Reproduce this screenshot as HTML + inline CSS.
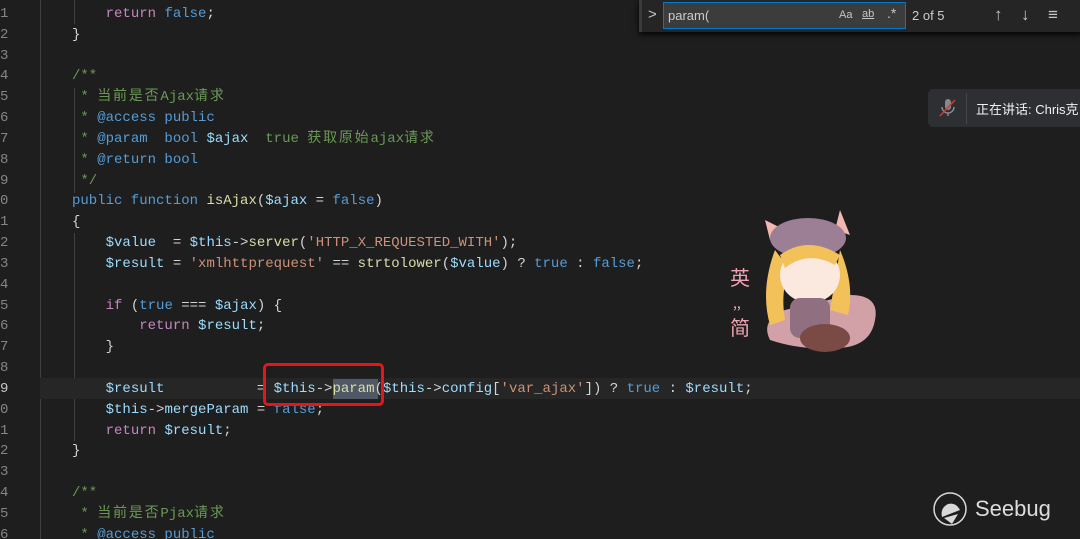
<!DOCTYPE html>
<html><head><meta charset="utf-8"><style>
html,body{margin:0;padding:0;background:#1e1e1e;width:1080px;height:539px;overflow:hidden;position:relative;}
.code{position:absolute;left:72px;top:4px;font-family:"Liberation Mono","Noto Sans CJK SC",monospace;font-size:14px;line-height:20.83px;color:#d4d4d4;white-space:pre;margin:0}
.ln{position:absolute;left:0;top:4px;font-family:"Liberation Mono",monospace;font-size:14px;line-height:20.83px;color:#858585;white-space:pre;margin:0}
.k{color:#569cd6}.c{color:#c586c0}.v{color:#9cdcfe}.f{color:#dcdcaa}.s{color:#ce9178}.g{color:#6a9955}
.cj{letter-spacing:1.8px}
.guide{position:absolute;width:1px;background:#404040}
</style></head><body>
<div class="guide" style="left:40px;top:0;height:539px"></div>
<div class="guide" style="left:74px;top:0;height:24px"></div>
<div class="guide" style="left:74px;top:88px;height:105px"></div>
<div class="guide" style="left:74px;top:233px;height:208px"></div>
<div style="position:absolute;left:40px;top:378px;width:1040px;height:21px;background:#262626"></div>
<div style="position:absolute;left:333px;top:379px;width:45px;height:20px;background:#4f5864"></div>
<pre class="ln">1
2
3
4
5
6
7
8
9
0
1
2
3
4
5
6
7
8
<span style="color:#c6c6c6">9</span>
0
1
2
3
4
5
6</pre>
<pre class="code">    <span class="c">return</span> <span class="k">false</span>;
}

<span class="g">/**</span>
<span class="g"> * <span class="cj">当前是否</span>Ajax<span class="cj">请求</span></span>
<span class="g"> * </span><span class="k">@access public</span>
<span class="g"> * </span><span class="k">@param  bool</span> <span class="v">$ajax</span>  <span class="g">true <span class="cj">获取原始</span>ajax<span class="cj">请求</span></span>
<span class="g"> * </span><span class="k">@return bool</span>
<span class="g"> */</span>
<span class="k">public function</span> <span class="f">isAjax</span>(<span class="v">$ajax</span> = <span class="k">false</span>)
{
    <span class="v">$value</span>  = <span class="v">$this</span>-&gt;<span class="f">server</span>(<span class="s">'HTTP_X_REQUESTED_WITH'</span>);
    <span class="v">$result</span> = <span class="s">'xmlhttprequest'</span> == <span class="f">strtolower</span>(<span class="v">$value</span>) ? <span class="k">true</span> : <span class="k">false</span>;

    <span class="c">if</span> (<span class="k">true</span> === <span class="v">$ajax</span>) {
        <span class="c">return</span> <span class="v">$result</span>;
    }

    <span class="v">$result</span>           = <span class="v">$this</span>-&gt;<span class="f">param</span>(<span class="v">$this</span>-&gt;<span class="v">config</span>[<span class="s">'var_ajax'</span>]) ? <span class="k">true</span> : <span class="v">$result</span>;
    <span class="v">$this</span>-&gt;<span class="v">mergeParam</span> = <span class="k">false</span>;
    <span class="c">return</span> <span class="v">$result</span>;
}

<span class="g">/**</span>
<span class="g"> * <span class="cj">当前是否</span>Pjax<span class="cj">请求</span></span>
<span class="g"> * </span><span class="k">@access public</span></pre>
<div style="position:absolute;left:263px;top:363px;width:115px;height:37px;border:3px solid #e8141b;border-radius:5px"></div>

<!-- find widget -->
<div style="position:absolute;left:639px;top:0;width:441px;height:32px;background:#252526;border-left:3px solid #3a3a3a;box-shadow:0 2px 6px #000"></div>
<div style="position:absolute;left:648px;top:6px;color:#c5c5c5;font:15px 'Liberation Sans',sans-serif">&gt;</div>
<div style="position:absolute;left:663px;top:2px;width:241px;height:25px;background:#3c3c3c;border:1px solid #007acc"></div>
<div style="position:absolute;left:668px;top:8px;color:#cccccc;font:13px 'Liberation Sans',sans-serif">param(</div>
<div style="position:absolute;left:839px;top:9px;color:#c5c5c5;font:11px 'Liberation Sans',sans-serif">Aa</div>
<div style="position:absolute;left:862px;top:8px;color:#c5c5c5;font:11px 'Liberation Sans',sans-serif;text-decoration:underline">ab</div>
<div style="position:absolute;left:887px;top:5px;color:#c5c5c5;font:14px 'Liberation Sans',sans-serif">.*</div>
<div style="position:absolute;left:912px;top:8px;color:#cccccc;font:13px 'Liberation Sans',sans-serif">2 of 5</div>
<div style="position:absolute;left:994px;top:5px;color:#c5c5c5;font:17px 'Liberation Sans',sans-serif">↑</div>
<div style="position:absolute;left:1021px;top:5px;color:#c5c5c5;font:17px 'Liberation Sans',sans-serif">↓</div>
<div style="position:absolute;left:1048px;top:5px;color:#c5c5c5;font:17px 'Liberation Sans',sans-serif">≡</div>

<!-- notification -->
<div style="position:absolute;left:928px;top:89px;width:160px;height:38px;background:#2d2f33;border-radius:5px"></div>
<svg style="position:absolute;left:938px;top:96px" width="20" height="24"><rect x="7" y="3" width="6" height="11" rx="3" fill="#888"/><path d="M4 11a6 6 0 0 0 12 0M10 17v3" stroke="#888" stroke-width="1.5" fill="none"/><path d="M2 20L17 4" stroke="#d03a3a" stroke-width="1.5"/></svg>
<div style="position:absolute;left:966px;top:93px;width:1px;height:31px;background:#44464a"></div>
<div style="position:absolute;left:976px;top:99px;color:#f0f0f0;font:13px 'Liberation Sans','Noto Sans CJK SC',sans-serif;white-space:nowrap">正在讲话: Chris克</div>

<!-- sticker -->
<svg style="position:absolute;left:730px;top:200px" width="160" height="160">
<path d="M55 110 Q30 120 40 140 Q70 150 100 148 Q140 150 145 120 Q150 95 120 95 Z" fill="#f1b9c0" opacity="0.85"/>
<path d="M40 40 L35 20 L55 30 Z M105 30 L110 10 L120 35 Z" fill="#f2b8b0"/>
<ellipse cx="78" cy="38" rx="38" ry="20" fill="#9c7f95"/>
<path d="M45 50 Q30 90 40 125 L55 120 Q50 90 60 70 Z M110 50 Q125 85 118 115 L100 110 Z" fill="#f3c159"/>
<ellipse cx="80" cy="75" rx="30" ry="28" fill="#fbe8de"/>
<path d="M50 55 Q78 35 110 55 L105 65 Q78 50 55 68 Z" fill="#f3c159"/>
<rect x="60" y="98" width="40" height="40" rx="10" fill="#8f6f80"/>
<ellipse cx="95" cy="138" rx="25" ry="14" fill="#7a4a45"/>
<text x="0" y="85" fill="#f2a3b5" font-size="20" font-family="Noto Sans CJK SC">英</text>
<text x="3" y="108" fill="#f2a3b5" font-size="14" font-family="Noto Sans CJK SC">,,</text>
<text x="0" y="135" fill="#f2a3b5" font-size="20" font-family="Noto Sans CJK SC">简</text>
</svg>

<!-- seebug -->
<svg style="position:absolute;left:932px;top:490px" width="40" height="40"><circle cx="18" cy="19" r="16" fill="none" stroke="#d8d8d8" stroke-width="1.5"/><path d="M10 27 Q8 18 16 14 Q24 12 28 20 Z" fill="#d8d8d8"/><path d="M12 28 L20 34 L26 24 Z" fill="#d8d8d8"/></svg>
<div style="position:absolute;left:975px;top:496px;color:#dcdcdc;font:22px 'Liberation Sans',sans-serif">Seebug</div>
</body></html>
